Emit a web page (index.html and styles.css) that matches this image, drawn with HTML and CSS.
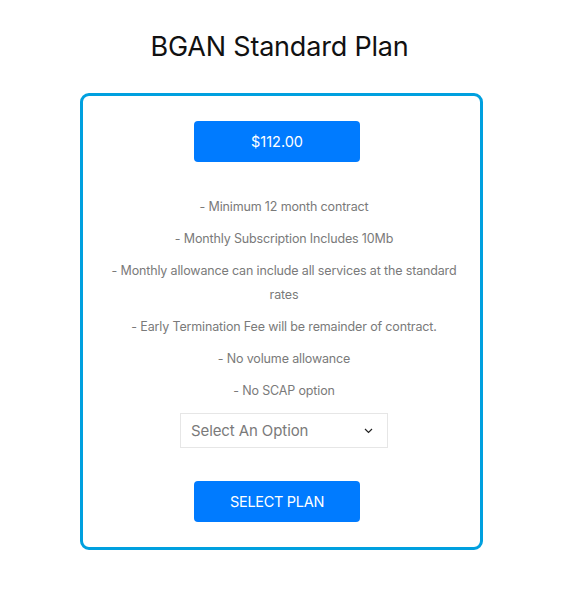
FILE: index.html
```html
<!DOCTYPE html>
<html lang="en">
<head>
<meta charset="utf-8">
<title>BGAN Standard Plan</title>
<link rel="stylesheet" href="styles.css">
</head>
<body>
<div class="page">
  <h1 class="title">BGAN Standard Plan</h1>
  <div class="card">
    <div class="price">$112.00</div>
    <div class="features">
      <p>- Minimum 12 month contract</p>
      <p>- Monthly Subscription Includes 10Mb</p>
      <p>- Monthly allowance can include all services at the standard rates</p>
      <p>- Early Termination Fee will be remainder of contract.</p>
      <p>- No volume allowance</p>
      <p>- No SCAP option</p>
    </div>
    <div class="select">
      <span class="select-text">Select An Option</span>
      <svg class="chev" width="9" height="6" viewBox="0 0 9 6"><path d="M1 1l3.5 3.5L8 1" fill="none" stroke="#222" stroke-width="1.2"/></svg>
    </div>
    <div class="btn">SELECT PLAN</div>
  </div>
</div>
</body>
</html>
```
FILE: styles.css
```css
html, body {
  margin: 0;
  padding: 0;
  background: #fff;
}
body {
  font-family: Inter, "Open Sans", "Liberation Sans", sans-serif;
}
.page {
  width: 403px;
  margin-left: 80px;
  padding-top: 28px;
}
.title {
  margin: 0;
  font-size: 27px;
  font-weight: 400;
  color: #111;
  text-align: center;
  line-height: 38px;
  letter-spacing: -0.2px;
  padding-right: 4px;
}
.card {
  margin-top: 27px;
  height: 457px;
  box-sizing: border-box;
  border: 3px solid #00a0df;
  border-radius: 9px;
  display: flex;
  flex-direction: column;
  align-items: center;
  padding-top: 25px;
}
.price, .btn {
  width: 166px;
  height: 41px;
  background: #007bff;
  border-radius: 4px;
  color: #fff;
  display: flex;
  align-items: center;
  justify-content: center;
  font-size: 14.5px;
  margin-right: 9px;
}
.features {
  margin-top: 33px;
  margin-left: 5px;
  width: 362px;
  text-align: center;
  color: #7a7a7a;
  font-size: 12.5px;
  line-height: 24px;
  letter-spacing: -0.15px;
}
.features p {
  margin: 0 0 8px 0;
}
.select {
  margin-top: 2px;
  margin-left: 5px;
  width: 208px;
  height: 35px;
  box-sizing: border-box;
  border: 1px solid #e6e6e6;
  display: flex;
  align-items: center;
  justify-content: space-between;
  padding: 0 14px 0 10px;
}
.select-text {
  font-size: 15px;
  color: #7a7a7a;
  letter-spacing: -0.1px;
}
.btn {
  margin-top: 33px;
  letter-spacing: -0.3px;
}
```
